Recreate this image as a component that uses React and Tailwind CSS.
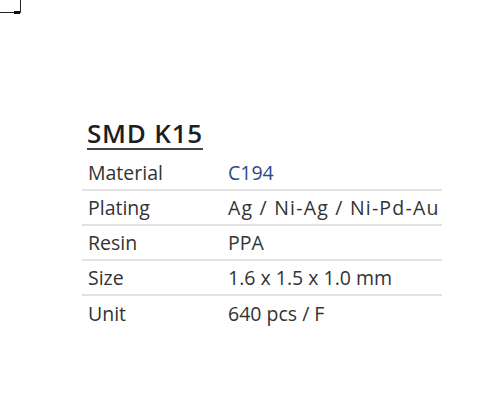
const rows = [
  ['Material', 'C194', 'text-[#2b4a8f]'],
  ['Plating', 'Ag / Ni-Ag / Ni-Pd-Au', 'tracking-[1.2px]'],
  ['Resin', 'PPA'],
  ['Size', '1.6 x 1.5 x 1.0 mm'],
  ['Unit', '640 pcs / F'],
];

export default function App() {
  return (
    <div className="h-[417px] w-[500px] overflow-hidden bg-white font-['Open_Sans',sans-serif] text-[#333]">
      {/* crop mark */}
      <svg width="24" height="16" className="block">
        <path d="M0 12.5H20.5V0" fill="none" stroke="#222" strokeWidth="1" />
        <rect x="14" y="11" width="6" height="3" fill="#111" />
      </svg>

      <div className="ml-[82px] w-[360px] pt-[101px]">
        <h2 className="pl-[5px] text-[26px] leading-[32px] font-semibold tracking-[0.8px] text-[#1e1e1e] underline decoration-2 decoration-[#444] underline-offset-[5px]">
          SMD K15
        </h2>
        <div className="mt-[7px]">
          {rows.map(([k, v, cls], i) => (
            <div
              key={k}
              className={`flex h-[35px] items-center text-[19.5px] ${i < rows.length - 1 ? 'border-b-2 border-[#e2e2e2]' : ''}`}
            >
              <span className="w-[146px] pl-[6px]">{k}</span>
              <span className={cls}>{v}</span>
            </div>
          ))}
        </div>
      </div>
    </div>
  );
}
